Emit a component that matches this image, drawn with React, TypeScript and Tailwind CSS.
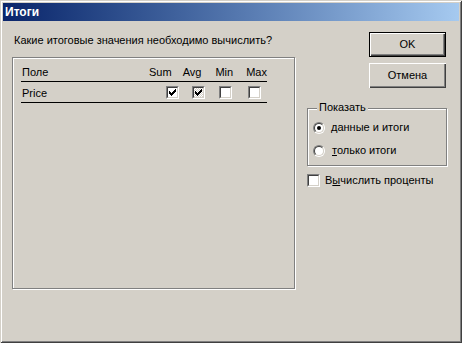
import React from "react";

const font = { fontFamily: '"Liberation Sans", Arial, sans-serif' };

const Check = () => (
  <svg width="7" height="7" viewBox="0 0 7 7" shapeRendering="crispEdges">
    <path
      d="M6 0h1v3h-1v1h-1v1h-1v1h-1v1h-1v-1h-1v-1h-1v-3h1v1h1v1h1v-1h1v-1h1z"
      fill="#000"
    />
  </svg>
);

const CheckBox = ({ checked = false, focused = false }: { checked?: boolean; focused?: boolean }) => (
  <div className="relative w-[13px] h-[13px] shrink-0 border border-[#808080] border-r-white border-b-white">
    <div
      className={
        "w-full h-full flex items-center justify-center border border-[#404040] border-r-[#d4d0c8] border-b-[#d4d0c8] " +
        (focused
          ? "bg-[repeating-conic-gradient(#ffffff_0_25%,#d4d0c8_0_50%)] bg-[length:2px_2px]"
          : "bg-white")
      }
    >
      {checked && <Check />}
    </div>
  </div>
);

const Radio = ({ checked = false }: { checked?: boolean }) => (
  <div className="w-[12px] h-[12px] shrink-0 rounded-full border border-[#808080] border-r-white border-b-white">
    <div className="w-full h-full rounded-full border border-[#404040] border-r-[#d4d0c8] border-b-[#d4d0c8] bg-white flex items-center justify-center">
      {checked && <div className="w-[4px] h-[4px] rounded-full bg-black" />}
    </div>
  </div>
);

const Button = ({ label, isDefault = false }: { label: string; isDefault?: boolean }) => (
  <div
    className={
      "w-[77px] h-[25px] flex items-center justify-center text-[11px] text-black " +
      (isDefault
        ? "border border-black shadow-[inset_1px_1px_#ffffff,inset_-1px_-1px_#404040,inset_-2px_-2px_#808080]"
        : "shadow-[inset_1px_1px_#ffffff,inset_-1px_-1px_#404040,inset_-2px_-2px_#808080]")
    }
  >
    {label}
  </div>
);

export default function App() {
  return (
    <div
      className="w-[462px] h-[343px] bg-[#d4d0c8] pt-[3px] px-[3px] shadow-[inset_1px_1px_#d4d0c8,inset_-1px_-1px_#404040,inset_2px_2px_#ffffff,inset_-2px_-2px_#808080] text-black text-[11px]"
      style={font}
    >
      {/* Title bar */}
      <div className="h-[18px] bg-gradient-to-r from-[#0a246a] to-[#a6caf0] flex items-center pl-[2px]">
        <span className="text-white font-bold text-[12px] leading-[13px]">Итоги</span>
      </div>

      <div className="flex px-[9px]">
        {/* Left column */}
        <div className="w-[283px]">
          <div className="pt-[13px] ml-[2px] leading-[13px] whitespace-nowrap">
            Какие итоговые значения необходимо вычислить?
          </div>
          <div className="mt-[10px] h-[232px] w-[283px] border border-[#808080] shadow-[inset_1px_1px_#ffffff,1px_1px_#ffffff] px-[8px]">
            <div className="w-[246px] h-[24px] border-b border-black pt-[8px] leading-[13px] flex">
              <span className="w-[128px] ml-[1px]">Поле</span>
              <span className="w-[34px]">Sum</span>
              <span className="w-[33px]">Avg</span>
              <span className="w-[31px]">Min</span>
              <span>Max</span>
            </div>
            <div className="w-[246px] h-[21px] border-b border-black flex items-center leading-[13px]">
              <span className="w-[145px] pt-[2px] pl-[1px]">Price</span>
              <CheckBox checked />
              <div className="w-[13px]" />
              <CheckBox checked focused />
              <div className="w-[14px]" />
              <CheckBox />
              <div className="w-[16px]" />
              <CheckBox />
            </div>
          </div>
        </div>

        {/* Right column */}
        <div className="ml-[12px] pt-[11px]">
          <div className="ml-[62px] flex flex-col gap-[6px]">
            <Button label="OK" isDefault />
            <Button label="Отмена" />
          </div>

          <div className="relative mt-[20px] w-[140px] h-[58px] border border-[#808080] shadow-[inset_1px_1px_#ffffff,1px_1px_#ffffff] pt-[7px] pl-[5px]">
            <span className="absolute left-[9px] top-[-8px] bg-[#d4d0c8] px-[2px] leading-[13px]">
              Показать
            </span>
            <div className="h-[23px] flex items-center gap-[6px]">
              <Radio checked />
              <span className="leading-[13px]">
                <span className="underline">д</span>анные и итоги
              </span>
            </div>
            <div className="h-[23px] flex items-center gap-[7px]">
              <Radio />
              <span className="leading-[13px]">
                <span className="underline">т</span>олько итоги
              </span>
            </div>
          </div>

          <div className="mt-[8px] flex items-center gap-[5px]">
            <CheckBox />
            <span className="leading-[13px]">
              В<span className="underline">ы</span>числить проценты
            </span>
          </div>
        </div>
      </div>
    </div>
  );
}
